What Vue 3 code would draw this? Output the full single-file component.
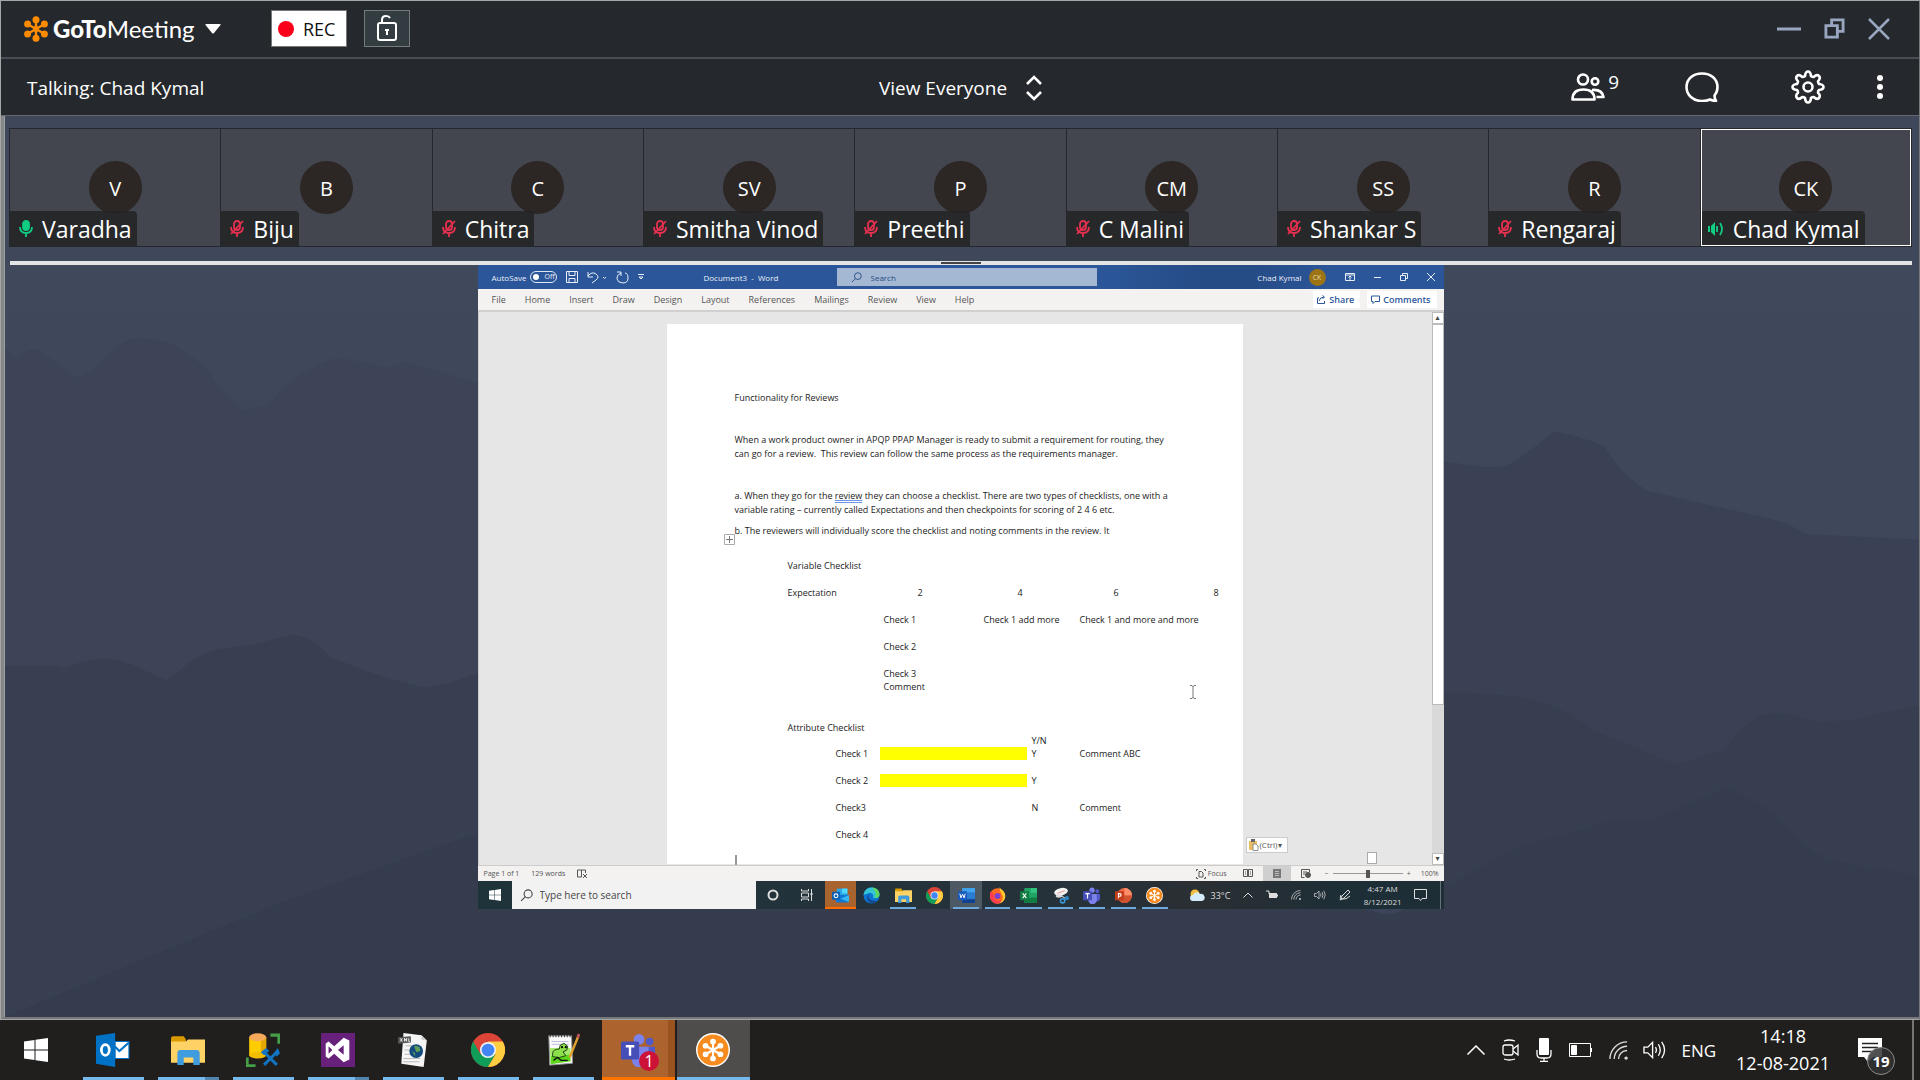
<script setup>
const people = [
  { initials: 'V', name: 'Varadha', state: 'on' },
  { initials: 'B', name: 'Biju', state: 'muted' },
  { initials: 'C', name: 'Chitra', state: 'muted' },
  { initials: 'SV', name: 'Smitha Vinod', state: 'muted' },
  { initials: 'P', name: 'Preethi', state: 'muted' },
  { initials: 'CM', name: 'C Malini', state: 'muted' },
  { initials: 'SS', name: 'Shankar S', state: 'muted' },
  { initials: 'R', name: 'Rengaraj', state: 'muted' },
  { initials: 'CK', name: 'Chad Kymal', state: 'talking' },
]
const tabs = ['File', 'Home', 'Insert', 'Draw', 'Design', 'Layout', 'References', 'Mailings', 'Review', 'View', 'Help']
const sharedApps = [
  { id: 'outlook', label: 'Outlook', cls: 'alert' },
  { id: 'edge', label: 'Edge', cls: '' },
  { id: 'folder', label: 'File Explorer', cls: 'open' },
  { id: 'chrome', label: 'Chrome', cls: '' },
  { id: 'word', label: 'Word', cls: 'open current' },
  { id: 'firefox', label: 'Firefox', cls: 'open' },
  { id: 'excel', label: 'Excel', cls: 'open' },
  { id: 'snip', label: 'Snip', cls: 'open' },
  { id: 'teams', label: 'Teams', cls: 'open' },
  { id: 'ppt', label: 'PowerPoint', cls: 'open' },
  { id: 'goto', label: 'GoToMeeting', cls: 'open' },
]
const apps = [
  { id: 'outlook-old', label: 'Outlook', cls: '' },
  { id: 'folder', label: 'File Explorer', cls: 'many' },
  { id: 'sql', label: 'Database Tools', cls: '' },
  { id: 'vs', label: 'Visual Studio', cls: 'many' },
  { id: 'xml', label: 'XML Editor', cls: '' },
  { id: 'chrome', label: 'Chrome', cls: '' },
  { id: 'notepad', label: 'Notepad++', cls: '' },
  { id: 'teams', label: 'Teams', cls: 'alert' },
  { id: 'goto', label: 'GoToMeeting', cls: 'current' },
]
</script>

<template>
  <div class="desktop">
    <svg class="defs" aria-hidden="true">
      <symbol id="flower" viewBox="-13 -13 26 26">
        <g stroke="currentColor" stroke-width="2.4" fill="currentColor">
          <path d="M0-9V9M-7.8-4.5 7.8 4.5M-7.8 4.5 7.8-4.5" />
          <g stroke="none">
            <circle cy="-9.3" r="3.5" /><circle cy="9.3" r="3.5" />
            <circle cx="-8.4" cy="-5" r="3.5" /><circle cx="8.4" cy="-5" r="3.5" />
            <circle cx="-8.4" cy="5" r="3.5" /><circle cx="8.4" cy="5" r="3.5" />
            <circle r="3" />
          </g>
        </g>
      </symbol>
      <symbol id="win" viewBox="0 0 24 24">
        <path fill="#fff" d="M0 3.4 10.5 2v9.4H0zM11.5 1.8 24 0v11.4H11.5zM0 12.6h10.5V22L0 20.6zM11.5 12.6H24V24l-12.5-1.8z" />
      </symbol>
      <symbol id="folder" viewBox="0 0 32 32">
        <path fill="#d99b00" d="M0 5q0-2 2-2h10l2 3v6H0z" /><path fill="#ffd266" d="M0 8h14l2-2h16v22H0z" />
        <path fill="#3f9cdf" d="M6 30V19q0-3 3-3h15q3 0 3 3v11h-6v-7h-9v7z" />
      </symbol>
      <symbol id="chrome" viewBox="-16 -16 32 32">
        <circle r="16" fill="#db4437" />
        <path fill="#0f9d58" d="M-13.9-8A16 16 0 0 0 0 16L7 4 0 0-7 4z" />
        <path fill="#ffcd40" d="M13.9-8A16 16 0 0 1 0 16L7 4 0-8z" />
        <circle r="7.6" fill="#f1f1f1" /><circle r="6" fill="#4285f4" />
      </symbol>
      <symbol id="teams" viewBox="0 0 32 32">
        <circle cx="17" cy="6" r="5" fill="#7b83eb" /><circle cx="27" cy="8" r="3.6" fill="#5059c9" />
        <path fill="#5059c9" d="M22 13h10v9a6 6 0 0 1-8 5z" /><path fill="#7b83eb" d="M9 13h17v11a8 8 0 0 1-16 1z" />
        <rect y="8" width="17" height="17" rx="1.5" fill="#464eb8" />
        <path d="M4.500 12.500h8M8.500 12.500v9" stroke="#fff" stroke-width="2.200" />
      </symbol>
      <symbol id="goto" viewBox="-16 -16 32 32">
        <circle r="16" fill="#fff" /><circle r="14.600" fill="#f68b1f" />
        <g stroke="#fff" stroke-width="2" fill="#fff"><path d="M0-8V8M-7-4 7 4M-7 4 7-4" />
          <g stroke="none"><circle cy="-8" r="2.700" /><circle cy="8" r="2.700" /><circle cx="-7" cy="-4" r="2.700" /><circle cx="7" cy="-4" r="2.700" /><circle cx="-7" cy="4" r="2.700" /><circle cx="7" cy="4" r="2.700" /></g>
        </g>
      </symbol>
      <symbol id="outlook-old" viewBox="0 0 32 32">
        <path fill="#0072c6" d="M0 2.500 18 0v32L0 29z" />
        <path fill="#fff" stroke="#0072c6" d="M18 8h13v16H18z" /><path fill="none" stroke="#0072c6" stroke-width="2" d="M18 13l4 4 9-8" />
        <ellipse cx="8.800" cy="16" rx="3.700" ry="5" fill="none" stroke="#fff" stroke-width="2.600" />
      </symbol>
      <symbol id="outlook" viewBox="0 0 32 32">
        <rect x="9" y="3" width="20" height="14" fill="#28a8ea" /><rect x="19" y="3" width="10" height="9" fill="#50d9ff" />
        <path fill="#0f78d4" d="M7 15h25v12q0 2-2 2H9q-2 0-2-2z" /><path fill="#35b8f1" d="M32 15v13L16 22z" />
        <rect y="9" width="15" height="15" rx="1" fill="#0a5fb5" /><circle cx="7.500" cy="16.500" r="3.600" fill="none" stroke="#fff" stroke-width="2" />
      </symbol>
      <symbol id="edge" viewBox="0 0 32 32">
        <circle cx="16" cy="16" r="15" fill="#0c74ce" />
        <path fill="#35c5d5" d="M1 15C2 6 9 1 16 1c9 0 15 6 15 13 0 5-4 7-8 7-3 0-5-1-4-3 2-5-5-8-10-6-4 1-7 2-8 3z" />
        <path fill="#5bd65e" d="M17 1c8 0 14 6 14 13 0 5-4 7-8 7 2-6 2-12-6-20z" />
        <path fill="#15458f" d="M11 14c-3 7 3 14 16 12-8 8-18 4-19-5 0-3 1-5 3-7z" />
      </symbol>
      <symbol id="word" viewBox="0 0 32 32">
        <rect x="8" y="2" width="24" height="28" rx="2" fill="#2b7cd3" /><path fill="#41a5ee" d="M8 2h24v8H8z" /><path fill="#103f91" d="M8 23h24v7H8z" />
        <rect y="8" width="17" height="17" rx="1" fill="#185abd" /><path d="M3.500 12.500l2 8 3-7 3 7 2-8" fill="none" stroke="#fff" stroke-width="1.800" />
      </symbol>
      <symbol id="excel" viewBox="0 0 32 32">
        <rect x="8" y="2" width="24" height="28" rx="2" fill="#21a366" /><path fill="#33c481" d="M20 2h12v9H20z" /><path fill="#107c41" d="M8 20h24v10H8z" />
        <rect y="8" width="17" height="17" rx="1" fill="#107c41" /><path d="M5 12l7 9M12 12l-7 9" stroke="#fff" stroke-width="2" />
      </symbol>
      <symbol id="ppt" viewBox="0 0 32 32">
        <circle cx="18" cy="16" r="14" fill="#ed6c47" /><path fill="#ff8f6b" d="M18 2a14 14 0 0 1 14 14H18z" /><path fill="#d35230" d="M4 16h28a14 14 0 0 1-28 0z" />
        <rect y="8" width="17" height="17" rx="1" fill="#c43e1c" /><path d="M6.500 21v-8.500h2.500a2.500 2.500 0 0 1 0 5H6.500" fill="none" stroke="#fff" stroke-width="2" />
      </symbol>
      <symbol id="firefox" viewBox="0 0 32 32">
        <circle cx="16" cy="17" r="14.500" fill="#ff6a1f" /><path fill="#ffcb2e" d="M20 0c1 5 12 8 10.500 19C29 28 22 31 16 31c9-3 12-9 9-15-1-5-6-8-5-16z" />
        <path fill="#ff3b55" d="M3 8c-3 11 0 19 10 23 7 1 10-3 10-6-9 4-15-2-13-9 0-4-5-4-7-8z" /><circle cx="16" cy="17" r="5.500" fill="#7b3fd1" />
      </symbol>
      <symbol id="snip" viewBox="0 0 32 32">
        <ellipse cx="17" cy="9" rx="13" ry="7" fill="#f3f3f3" transform="rotate(-12 17 9)" /><path d="M10 12l14-5" stroke="#d77" stroke-width="1.500" />
        <ellipse cx="13" cy="17" rx="6" ry="3" fill="#dcdcdc" /><circle cx="20" cy="26" r="4" fill="none" stroke="#3a9bdc" stroke-width="3" /><circle cx="28" cy="21" r="4" fill="#2b84c4" /><path d="M15 14l9 7" stroke="#ddd" stroke-width="2" />
      </symbol>
      <symbol id="sql" viewBox="0 0 32 32">
        <path fill="#fc0" d="M3 4h16v17H3z" /><path fill="#e2a800" d="M14 4h5v17h-5z" /><ellipse cx="11" cy="21" rx="8" ry="3" fill="#f5bd00" /><ellipse cx="11" cy="4" rx="8" ry="3.800" fill="#f5a95a" />
        <path d="M23 2h8v8M1 23v8h8" fill="none" stroke="#43a047" stroke-width="3" />
        <path d="M16 17l13 13M30 17 17 30" stroke="#1273c4" stroke-width="2.800" /><path d="M14 18l5-4 3 3-5 4zM26 19l4-5 2 5-3 3z" fill="#1273c4" />
      </symbol>
      <symbol id="vs" viewBox="0 0 36 36">
        <path fill="#68217a" d="M0 0h36v36H0z" /><path fill="#fff" fill-rule="evenodd" d="m24 5 6 3v20l-6 3-10-9-6 5-3-2V11l3-2 6 5zm0 8-6 5 6 5zM8 14v8l4-4z" />
      </symbol>
      <symbol id="xml" viewBox="0 0 32 32">
        <path fill="#f5f5f5" d="M7 0l17 2 5 5-3 25L5 29z" /><path fill="#c9c9c9" d="M24 2l5 5-5-1z" />
        <path d="M9 12h11M8 16h8M8 20h7M7 24h16M7 27h15" stroke="#bbb" />
        <path fill="#555" d="M2 4l12-1v6L2 10z" /><path d="M4 5l2 3m0-3L4 8m4 0V5l1 2 1-2v3m2-3v3h1" stroke="#fff" fill="none" stroke-width=".8" />
        <circle cx="19" cy="17" r="6.500" fill="#134a80" /><path fill="#5f9d57" d="M17 12l5 1 1 4-4 1zM15 17l3 2v3z" />
      </symbol>
      <symbol id="notepad" viewBox="0 0 36 36">
        <path fill="#fafafa" stroke="#999" d="M3 3h24l1 29-24 2z" /><path d="M4 3h24" stroke="#333" stroke-width="3" stroke-dasharray="1 2" />
        <path fill="#a5e86b" d="M4 16h22v14L5 32z" /><path fill="#5ed61c" d="M5 25l20-2 1 7-21 3z" /><path d="M6 9h18M6 12h18" stroke="#bbd" />
        <path fill="#8ee04a" stroke="#163d0b" d="M7 22q0-5 7-5l1-4 4-2 4 3-1 4-4 2 3 4-7 2-7-1z" /><circle cx="17" cy="15" r="1.200" /><circle cx="21" cy="15" r="1.200" /><path d="M8 29l4-3 4 3h7" fill="none" stroke="#111" stroke-width="1.500" />
        <path d="M25 26 34 4" stroke="#e0a02c" stroke-width="2.500" /><path d="M33.500 5 35 1" stroke="#b55" stroke-width="3" />
      </symbol>
      <symbol id="wifi" viewBox="0 0 20 20">
        <g fill="none" stroke="currentColor" stroke-width="1.400"><path d="M1 19A18 18 0 0 1 19 1" /><path d="M5.500 19A13.500 13.500 0 0 1 19 5.500" /><path d="M10 19a9 9 0 0 1 9-9" /></g><circle cx="18" cy="18" r="1.800" fill="currentColor" />
      </symbol>
      <symbol id="volume" viewBox="0 0 24 20">
        <g fill="none" stroke="currentColor" stroke-width="1.400"><path d="M1 7h4l5-5v16l-5-5H1zM13 7q2 3 0 6M16 4q4 6 0 12M19.500 1.500q6 8.500 0 17" /></g>
      </symbol>
      <symbol id="restore" viewBox="0 0 22 22">
        <path fill="none" stroke="currentColor" stroke-width="3" d="M2 8h12v12H2zM8 8V2h12v12h-6" />
      </symbol>
      <symbol id="search" viewBox="0 0 12 12">
        <circle cx="7.500" cy="4.500" r="3.700" fill="none" stroke="currentColor" /><path d="M5 7 1 11" stroke="currentColor" />
      </symbol>
    </svg>

    <main class="meeting">
      <header class="titlebar">
        <button class="brand" aria-label="GoToMeeting menu">
          <svg class="flower" width="26" height="26"><use href="#flower" /></svg>
          <span class="word-mark"><b>GoTo</b>Meeting</span>
          <svg width="16" height="10" viewBox="0 0 16 10"><path d="M1 0h14q1 0 .5 1L9 9q-1 1-2 0L.5 1Q0 0 1 0z" fill="#fff" /></svg>
        </button>
        <button class="rec"><span class="dot"></span>REC</button>
        <button class="lock" aria-label="Lock meeting">
          <svg width="20" height="26" viewBox="0 0 20 26" fill="none" stroke="#fff" stroke-width="2"><rect x="1" y="8" width="18" height="17" rx="2" /><path d="M5 8V5q0-4 4-4 3 0 4 2" /><path d="M10 14v6M8 15h4" /></svg>
        </button>
        <div class="window-buttons">
          <button aria-label="Minimise"><svg width="24" height="22"><path d="M0 11h24" stroke="currentColor" stroke-width="3" /></svg></button>
          <button aria-label="Restore"><svg width="21" height="21"><use href="#restore" /></svg></button>
          <button aria-label="Close"><svg width="22" height="22" viewBox="0 0 22 22"><path d="M1 1l20 20M21 1 1 21" stroke="currentColor" stroke-width="2.500" /></svg></button>
        </div>
      </header>

      <div class="toolbar">
        <span class="talking">Talking: Chad Kymal</span>
        <button class="view">View Everyone
          <svg width="16" height="26" viewBox="0 0 16 26" fill="none" stroke="#fff" stroke-width="2.600"><path d="M1 9l7-7 7 7M1 17l7 7 7-7" /></svg>
        </button>
        <div class="tools">
          <button class="attendees" aria-label="9 attendees">
            <svg width="34" height="28" viewBox="0 0 34 28" fill="none" stroke="#fff" stroke-width="2.600"><circle cx="12" cy="6.500" r="5" /><circle cx="24" cy="8.500" r="3.300" /><path d="M1.500 26.500q0-10 11-10t11 10zM21 17q10-1 11.500 7h-7" stroke-linejoin="round" /></svg>
            <span class="count">9</span>
          </button>
          <button aria-label="Chat"><svg width="34" height="30" viewBox="0 0 34 30" fill="none" stroke="#fff" stroke-width="2.600"><path d="M31 29q-3 0-6-1.500-3 1.500-8 1.500C8 29 1.500 23 1.500 15S8 1.500 17 1.500 32.500 7 32.500 15q0 5-3 8.500 0 3 1.500 5.500z" stroke-linejoin="round" /></svg></button>
          <button aria-label="Settings"><svg width="34" height="34" viewBox="-17 -17 34 34" fill="none" stroke="#fff" stroke-width="2.600"><circle r="4.500" /><path stroke-linejoin="round" d="M-3-11Q-2.500-15.500 0-15.500T3-11Q4-10 5.700-10 9-13 11-11T10-5.700Q10-4 11-3 15.500-2.500 15.500 0T11 3Q10 4 10 5.700 13 9 11 11T5.700 10Q4 10 3 11 2.500 15.500 0 15.500T-3 11Q-4 10-5.700 10-9 13-11 11T-10 5.700Q-10 4-11 3-15.500 2.500-15.500 0T-11-3Q-10-4-10-5.700-13-9-11-11T-5.700-10Q-4-10-3-11z" /></svg></button>
          <button aria-label="More"><svg width="8" height="26"><circle cx="4" cy="4" r="3" fill="#fff" /><circle cx="4" cy="13" r="3" fill="#fff" /><circle cx="4" cy="22" r="3" fill="#fff" /></svg></button>
        </div>
      </div>

      <div class="body">
        <section class="strip">
          <article v-for="p in people" :key="p.name" class="card" :class="p.state">
            <div class="avatar">{{ p.initials }}</div>
            <div class="chip">
              <svg v-if="p.state === 'talking'" width="16" height="14" viewBox="0 0 16 14"><path fill="#0fce83" d="M0 4h2v6H0zM3 4l4-4v14l-4-4z" /><path d="M9 4v6M12 1q4 6 0 12" stroke="#0fce83" stroke-width="1.800" fill="none" /></svg>
              <svg v-else width="14" height="17" viewBox="0 0 14 17" fill="none" :stroke="p.state === 'on' ? '#0fce83' : '#e6304f'" stroke-width="1.800">
                <rect x="4" y="1" width="6" height="9" rx="3" :fill="p.state === 'on' ? '#0fce83' : 'none'" /><path d="M1 7q0 6 6 6t6-6M7 13v4" /><path v-if="p.state === 'muted'" d="M1 14 13 1" />
              </svg>
              <span>{{ p.name }}</span>
            </div>
          </article>
        </section>
        <div class="splitter"><span></span></div>

        <section class="stage">
          <svg class="hills" viewBox="0 30 1568 1538" preserveAspectRatio="none" aria-hidden="true">
            <path fill="#3e485a" d="M1170 190q70-8 120 5 80 30 150 50 70 20 128 25v900h-398z" />
            <path fill="#3d4457" d="M0 200l10 20q8-20 16-18l34 60q10-10 22-45 16-38 28-37 22 0 34 22 24 40 30 75l21 51 22-12q10-40 26-62 22-34 32-34l40 20 12-12q28 20 65 47V1200H0z" />
            <path fill="#3a4154" d="M1170 425q30 18 48 18 14 0 24-20l28-53q20 10 40 30 14 60 36 92l84 48q30 14 45 40l93 12v900h-398z" />
            <path fill="#373f51" d="M0 850h45l3 5q20-20 37-20 18 8 30 25l17 20 22-42q14-22 26-24l24-8 31-20q20 6 30 44 44 46 80 64l20-10 35-30V1568H0z" />
            <path fill="#363e50" d="M1170 905q50-2 80 14 30 16 50 62l70 71 40-32q14-60 35-72 14-6 40 17l30-5 53-30v638h-398z" />
            <path fill="#343c4e" d="M0 1568 220 1340 400 1180l720 170q12 16 26-2l94-128q30-20 60-40 10-15 50-15l60-67 40 52q22 80 50 100l68 30v288z" />
          </svg>

          <div class="shared">
            <div class="word-title">
              <div class="quick">
                <span>AutoSave</span>
                <span class="toggle"><i></i>Off</span>
                <svg width="12" height="12" viewBox="0 0 12 12" fill="none" stroke="currentColor"><path d="M.5.5h11v11h-11zM3 .5v4h6v-4M3 11.500v-4h6v4" /></svg>
                <svg width="20" height="13" viewBox="0 0 20 13" fill="none" stroke="currentColor"><path d="M1 1v5h5M1 5q4-5 8-2t0 6l-4 3M16 6l1.500 1.500L19 6" /></svg>
                <svg width="13" height="13" viewBox="0 0 13 13" fill="none" stroke="currentColor"><path d="M1 1h4v4M5 2q-5 2-4 6t6 4 5-5-3-5" /></svg>
                <svg width="6" height="6" viewBox="0 0 6 6" fill="none" stroke="currentColor"><path d="M0 .5h6M1 3h4L3 5z" /></svg>
              </div>
              <div class="doc-name">Document3&nbsp; -&nbsp; Word</div>
              <label class="find"><svg width="11" height="11"><use href="#search" /></svg><input type="text" placeholder="Search" aria-label="Search" /></label>
              <div class="account">
                <span>Chad Kymal</span><span class="ck">CK</span>
                <svg width="10" height="8" viewBox="0 0 10 8" fill="none" stroke="currentColor"><path d="M.5.5h9v7h-9zM.5 2h9M5 7V3M3.500 4.500 5 3l1.500 1.500" /></svg>
                <svg width="7" height="8"><path d="M0 4.500h7" stroke="currentColor" /></svg>
                <svg width="8" height="8" viewBox="0 0 8 8" fill="none" stroke="currentColor"><path d="M.5 2.500h5v5h-5zM2.500 2V.5h5v5H6" /></svg>
                <svg width="8" height="8"><path d="M0 0l8 8M8 0 0 8" stroke="currentColor" /></svg>
              </div>
            </div>

            <nav class="ribbon">
              <button v-for="t in tabs" :key="t">{{ t }}</button>
              <span class="grow"></span>
              <button class="boxed"><svg width="9" height="9" viewBox="0 0 9 9" fill="none" stroke="currentColor"><path d="M2 3H.5v5.500h7V6M2 6q1-4 5-4M5.500.5 7.500 2 5.500 4" /></svg>Share</button>
              <button class="boxed"><svg width="9" height="9" viewBox="0 0 9 9" fill="none" stroke="currentColor"><path d="M.5 1h8v5.500H4l-2 2v-2H.5z" /></svg>Comments</button>
            </nav>

            <div class="canvas">
              <div class="page">
                <h1>Functionality for Reviews</h1>
                <p>When a work product owner in APQP PPAP Manager is ready to submit a requirement for routing, they<br />can go for a review.&nbsp; This review can follow the same process as the requirements manager.</p>
                <p>a. When they go for the <u>review</u> they can choose a checklist. There are two types of checklists, one with a<br />variable rating – currently called Expectations and then checkpoints for scoring of 2 4 6 etc.</p>
                <p class="last">b. The reviewers will individually score the checklist and noting comments in the review. It
                  <svg class="anchor" width="11" height="11" viewBox="0 0 11 11" fill="none" stroke="#777"><path d="M.5.5h10v10H.5z" stroke="#aaa" /><path d="M5.500 2v7M2 5.500h7" /></svg>
                </p>
                <table class="variable">
                  <colgroup><col class="w96" /><col class="w100" /><col class="w96" /><col class="w100" /><col /></colgroup>
                  <tbody>
                    <tr><td colspan="5">Variable Checklist</td></tr>
                    <tr><td>Expectation</td><td class="num">2</td><td class="num">4</td><td class="num">6</td><td class="num">8</td></tr>
                    <tr><td></td><td>Check 1</td><td>Check 1 add more</td><td colspan="2">Check 1 and more and more</td></tr>
                    <tr><td></td><td>Check 2</td><td colspan="3"></td></tr>
                    <tr><td></td><td>Check 3<br />Comment</td><td colspan="3"></td></tr>
                  </tbody>
                </table>
                <table class="attribute">
                  <colgroup><col class="w48" /><col class="w44" /><col class="w147" /><col class="w53" /><col /></colgroup>
                  <tbody>
                    <tr class="short"><td colspan="5">Attribute Checklist</td></tr>
                    <tr class="short"><td colspan="3"></td><td class="yn">Y/N</td><td></td></tr>
                    <tr><td></td><td>Check 1</td><td><mark></mark></td><td class="yn">Y</td><td>Comment ABC</td></tr>
                    <tr><td></td><td>Check 2</td><td><mark></mark></td><td class="yn">Y</td><td></td></tr>
                    <tr><td></td><td>Check3</td><td></td><td class="yn">N</td><td>Comment</td></tr>
                    <tr><td></td><td>Check 4</td><td></td><td></td><td></td></tr>
                  </tbody>
                </table>
                <div class="caret"></div>
                <svg class="ibeam" width="8" height="14" viewBox="0 0 8 14" fill="none" stroke="#777"><path d="M1 .5h2l1 1 1-1h2M4 1v12M1 13.500h2l1-1 1 1h2" /></svg>
              </div>
              <button class="paste"><svg width="10" height="12" viewBox="0 0 10 12"><path fill="#e9bd66" d="M0 2h8v9H0z" /><path fill="#666" d="M2 0h4v3H2z" /><path fill="#fff" stroke="#777" stroke-width=".8" d="M4 5h3l2 2v4.500H4z" /></svg>(Ctrl) <span>▾</span></button>
              <span class="mini"></span>
              <div class="scroll"><i>▴</i><b></b><i class="down">▾</i></div>
            </div>

            <footer class="status">
              <span>Page 1 of 1</span><span>129 words</span>
              <svg width="11" height="10" viewBox="0 0 11 10" fill="none" stroke="currentColor"><path d="M.5 1h4v7h-4zM4.500 1h4v3M6 5l4 4M10 5 6 9" /></svg>
              <span class="grow"></span>
              <span class="focus"><svg width="10" height="10" viewBox="0 0 10 10" fill="none" stroke="currentColor"><path d="M.5 2V.5H2M8 .5h1.500V2M.5 8v1.500H2M8 9.500h1.500V8M3 2.500h2.500L7 4v4H3z" /></svg>Focus</span>
              <svg width="10" height="9" viewBox="0 0 10 9" fill="none" stroke="currentColor"><path d="M.5.5h4v7h-4zM5.500.5h4v7h-4zM2 3h1M2 5h1M7 3h1M7 5h1" /></svg>
              <span class="layout"><svg width="8" height="9" viewBox="0 0 8 9"><path fill="#777" d="M0 0h8v9H0z" /><path d="M2 2.500h4M2 4.500h4M2 6.500h4" stroke="#bbb" /></svg></span>
              <svg width="10" height="9" viewBox="0 0 10 9" fill="none" stroke="currentColor"><path d="M.5.5h8v3M.5.5v8h3M2 3h4M2 5h2" /><circle cx="7" cy="6" r="2.500" fill="#555" /></svg>
              <span class="zoom"><span>−</span><input type="range" aria-label="Zoom" value="50" /><span>+</span></span>
              <span class="pct">100%</span>
            </footer>

            <div class="inner-bar">
              <button class="begin" aria-label="Start"><svg width="12" height="12"><use href="#win" /></svg></button>
              <label class="type"><svg width="13" height="13"><use href="#search" /></svg><input type="text" placeholder="Type here to search" aria-label="Type here to search" /></label>
              <div class="helpers">
                <svg width="12" height="12"><circle cx="6" cy="6" r="4.500" fill="none" stroke="#ddd" stroke-width="2" /></svg>
                <svg width="12" height="12" viewBox="0 0 12 12" fill="none" stroke="#ddd"><path d="M.5 0v2h7V0M.5 12v-2h7v2M.5 4h7v4h-7zM10.500 0v12M9 5h3" /></svg>
              </div>
              <div class="inner-apps">
                <button v-for="a in sharedApps" :key="a.id" :class="a.cls" :aria-label="a.label"><svg width="17" height="17"><use :href="'#' + a.id" /></svg></button>
              </div>
              <div class="inner-tray">
                <span class="weather"><svg width="15" height="13" viewBox="0 0 15 13"><circle cx="5" cy="5" r="4.500" fill="#f5c041" /><path fill="#d7ecfb" d="M3 12a3 3 0 0 1 0-6 4 4 0 0 1 7-1 3.500 3.500 0 0 1 2 7z" /></svg>33°C</span>
                <svg width="10" height="6" viewBox="0 0 10 6" fill="none" stroke="currentColor"><path d="M.5 5.500 5 1l4.500 4.500" /></svg>
                <svg width="12" height="10" viewBox="0 0 12 10"><path fill="none" stroke="currentColor" d="M0 1h3v3h2" /><path fill="currentColor" d="M3 3h8v5H3zM11 4.500h1v2h-1z" /></svg>
                <svg width="10" height="10"><use href="#wifi" /></svg>
                <svg width="12" height="10"><use href="#volume" /></svg>
                <svg width="12" height="12" viewBox="0 0 12 12" fill="none" stroke="currentColor"><path d="M1 11l2-4 6-6 2 2-6 6zM2 6Q0 9 3 10q4 1 8-3" /></svg>
                <span class="clock">4:47 AM<br />8/12/2021</span>
                <svg width="13" height="12" viewBox="0 0 13 12" fill="none" stroke="currentColor"><path d="M.5.5h12v9H8l-1.500 2L5 9.500H.5z" /></svg>
              </div>
            </div>
          </div>
        </section>
      </div>
    </main>

    <footer class="taskbar">
      <button class="start" aria-label="Start"><svg width="24" height="24"><use href="#win" /></svg></button>
      <button v-for="a in apps" :key="a.id" class="app" :class="a.cls" :aria-label="a.label">
        <svg width="34" height="34"><use :href="'#' + a.id" /></svg>
        <span v-if="a.id === 'teams'" class="badge">1</span>
      </button>
      <div class="tray">
        <svg width="18" height="10" viewBox="0 0 18 10" fill="none" stroke="#fff" stroke-width="1.500"><path d="M.5 9.500 9 1l8.500 8.500" /></svg>
        <svg width="17" height="22" viewBox="0 0 17 22" fill="none" stroke="#fff" stroke-width="1.300"><rect x="1" y="6" width="10" height="10" rx="2" /><path d="M11 10l5-4v10l-5-4M2 2q5-2 11 0M2 20q5 2 11 0" /></svg>
        <svg width="16" height="24" viewBox="0 0 16 24"><rect x="3" width="10" height="17" rx="1" fill="#fff" /><path d="M1 12v4q0 4 4 4h6q4 0 4-4v-4M8 20v3M4 23.500h8" fill="none" stroke="#fff" stroke-width="1.300" /></svg>
        <svg width="23" height="14" viewBox="0 0 23 14" fill="none" stroke="#fff"><path d="M.5.5h21v13H.5zM22.500 5v4" /><path d="M2.500 2.500h5v9h-5z" fill="#fff" /></svg>
        <svg class="tight" width="19" height="19" color="#ddd"><use href="#wifi" /></svg>
        <svg class="tight" width="23" height="20" color="#fff"><use href="#volume" /></svg>
        <span class="lang">ENG</span>
        <span class="when">14:18<br />12-08-2021</span>
        <span class="notes">
          <svg width="24" height="24" viewBox="0 0 24 24"><path fill="#fff" d="M0 0h24v19h-9l-5 5-4-5H0z" /><path d="M4 5.500h16M4 9.500h16M4 13.500h10" stroke="#222" stroke-width="1.500" /></svg>
          <b>19</b>
        </span>
      </div>
    </footer>
  </div>
</template>

<style>
body { margin: 0; background: #201f1e; }
</style>

<style scoped>
* { box-sizing: border-box; }
button, input { font: inherit; color: inherit; background: none; border: 0; padding: 0; margin: 0; }
svg { display: block; flex: none; }
.defs { position: absolute; width: 0; height: 0; }
.desktop { min-height: 100vh; display: flex; flex-direction: column; font-family: "Open Sans", "Noto Sans", sans-serif; color: #fff; }
.grow { flex: 1; }
.meeting { flex: 1; display: flex; flex-direction: column; border: 1px solid #a5a7a6; border-right-color: #77787a; background: #25282d; }

.titlebar { height: 58px; display: flex; align-items: center; padding: 0 29px 1px 22px; border-bottom: 2px solid #4a4d55; }
.brand { display: flex; align-items: center; width: 248px; }
.flower { color: #ff8b00; margin-right: 4px; }
.word-mark { font: 400 24px/30px Lato, sans-serif; margin-right: 10px; }
.word-mark b { font-weight: 900; }
.rec { height: 37px; width: 76px; background: #fff; border: 1px solid #777; color: #111; font-size: 18px; display: flex; align-items: center; padding-left: 6px; gap: 9px; }
.dot { width: 16px; height: 16px; border-radius: 50%; background: #fb0019; }
.lock { width: 46px; height: 37px; margin-left: 17px; border: 1px solid #747a7e; background: #323c41; display: flex; justify-content: center; padding-top: 4px; }
.window-buttons { margin-left: auto; display: flex; align-items: center; gap: 23px; color: #98a7bf; }

.toolbar { height: 57px; display: grid; grid-template-columns: 1fr auto 1fr; align-items: center; padding: 2px 25px 0 26px; border-bottom: 1px solid #66686e; font-size: 19px; }
.view { display: flex; align-items: center; gap: 19px; }
.tools { display: flex; align-items: center; justify-content: flex-end; padding: 0 10px 2px 0; }
.tools button { margin-left: 66px; }
.tools button:nth-child(3) { margin-left: 72px; }
.tools button:last-child { margin-left: 51px; }
.attendees { display: flex; gap: 3px; }
.count { line-height: 18px; }

.body { flex: 1; display: flex; flex-direction: column; background: #3f475b; border-left: 3px solid #858789; border-bottom: 2px solid #77787a; box-shadow: inset 1px 0 #9da0a4; }
.strip { display: grid; grid-template-columns: repeat(9, 1fr); margin: 12px 7px 14px 5px; height: 119px; border: 1px solid #25272a; border-left: 0; background: #43464f; }
.card { position: relative; border-left: 1px solid #25272a; display: flex; align-items: center; justify-content: center; }
.card.talking::after { content: ""; position: absolute; inset: 0; border: 1px solid #fff; }
.avatar { width: 53px; height: 53px; border-radius: 50%; background: #2c2624; font-size: 20px; line-height: 55px; text-align: center; }
.chip { position: absolute; left: 0; bottom: 0; height: 35px; display: flex; align-items: center; gap: 9px; padding: 0 5px 0 9px; background: rgba(37, 37, 38, .9); border-radius: 0 4px 0 0; font-size: 23px; line-height: 34px; white-space: nowrap; }
.talking .chip { padding-left: 7px; }
.splitter { height: 4px; margin: 0 7px 0 6px; background: #e4e6e4; display: flex; justify-content: center; align-items: center; }
.splitter span { width: 40px; height: 2px; background: #444; }

.stage { flex: 1; position: relative; display: flex; flex-direction: column; align-items: center; background: linear-gradient(#40485b, #3c4459 50%); margin-left: 1px; padding: 0 3px 108px 0; }
.hills { position: absolute; inset: 0; width: 100%; height: 100%; }
.shared { position: relative; width: min(966px, 100%); background: #e6e6e6; color: #444; overflow: hidden; }

.word-title { height: 24px; display: grid; grid-template-columns: 226px 133px 260px 1fr; align-items: center; background: #2b579a; color: #e8eef8; font-size: 8px; }
.quick { display: flex; align-items: center; gap: 9px; padding-left: 14px; }
.toggle { width: 27px; height: 12px; margin-left: -5px; border: 1px solid #dfe7f4; border-radius: 6px; display: flex; align-items: center; gap: 5px; padding-left: 2px; font-size: 7px; line-height: 10px; }
.toggle i { width: 6px; height: 6px; border-radius: 50%; background: #fff; }
.find { height: 18px; background: #a4b7d3; color: #274b86; display: flex; align-items: center; gap: 9px; padding-left: 14px; }
input { min-width: 0; outline: none; }
.find input::placeholder { color: #274b86; opacity: 1; }
.account { height: 24px; display: flex; align-items: center; justify-content: flex-end; gap: 19px; padding-right: 9px; background: linear-gradient(90deg, #2b579a, #264c86 30%, #264c86 45%, #2b579a 70%); }
.ck { width: 17px; height: 17px; border-radius: 50%; background: #9c7413; color: #e8d9a8; font-size: 7px; line-height: 17px; text-align: center; margin-left: -12px; }

.ribbon { height: 21px; display: flex; align-items: center; gap: 19px; padding: 0 7px 0 14px; background: #f3f2f1; font-size: 9px; color: #555; }
.boxed { height: 17px; padding: 0 6px 0 4px; background: #fff; color: #2b579a; font-weight: 600; display: flex; align-items: center; gap: 3px; border-radius: 1px; }
.boxed + .boxed { margin-left: -12px; }

.canvas { position: relative; height: 555px; padding: 13px 12px 0 189px; border-left: 1px solid #ccc; border-top: 2px solid #d0d0d0; overflow: hidden; }
.page { position: relative; width: 576px; height: 540px; margin-top: -1px; margin-left: -1px; padding: 67px 0 0 68px; background: #fff; color: #222; font: 400 9px/14px "Open Sans", "Noto Sans", sans-serif; white-space: nowrap; }
.page h1 { font: inherit; margin: 0 0 28px; }
.page p { margin: 0 0 28px; }
.page p:nth-of-type(2) { margin-bottom: 7px; }
.page .last { position: relative; margin-bottom: 21px; }
u { text-decoration: underline double #6f93e6; }
.anchor { position: absolute; left: -11px; top: 10px; }
table { table-layout: fixed; width: 455px; margin-left: 53px; border-collapse: collapse; line-height: 13px; }
.variable { margin-bottom: 27px; }
tr { height: 27px; }
.short { height: 13px; }
td { padding: 0; vertical-align: top; }
.num { padding-left: 34px; }
.yn { padding-left: 5px; }
.w96 { width: 96px; } .w100 { width: 100px; } .w48 { width: 48px; } .w44 { width: 44px; } .w147 { width: 147px; } .w53 { width: 53px; }
mark { display: block; height: 13px; background: #ff0; }
.caret { width: 2px; height: 11px; background: #999; }
.ibeam { position: absolute; left: 522px; top: 361px; }
.paste { position: absolute; left: 767px; bottom: 12px; width: 42px; height: 16px; background: #fdfdfd; border: 1px solid #ccc; color: #555; font-size: 8px; line-height: 12px; display: flex; align-items: center; gap: 1px; padding-left: 2px; }
.mini { position: absolute; right: 67px; bottom: 1px; width: 10px; height: 12px; background: #fff; border: 1px solid #aaa; }
.scroll { position: absolute; top: 0; right: 0; bottom: 0; width: 12px; background: #d9d9d9; display: flex; flex-direction: column; }
.scroll i, .scroll b { display: block; background: #fff; border: 1px solid #bbb; }
.scroll i { height: 12px; font: normal 8px/10px "DejaVu Sans", sans-serif; text-align: center; }
.scroll b { height: 381px; }
.scroll .down { margin-top: auto; }

.status { height: 16px; display: flex; align-items: center; gap: 12px; padding: 0 5px 0 6px; background: #f3f2f1; border-top: 1px solid #ccc; font-size: 7px; line-height: 14px; color: #555; }
.focus { display: flex; align-items: center; gap: 2px; margin-right: 4px; }
.layout { width: 28px; height: 15px; background: #cfcfcf; display: flex; align-items: center; justify-content: center; margin: 0 -2px; }
.zoom { display: flex; align-items: center; gap: 4px; margin-left: 2px; }
.zoom input { width: 70px; height: 8px; appearance: none; background: linear-gradient(#999, #999) center / 100% 1px no-repeat; }
.zoom input::-webkit-slider-thumb { appearance: none; width: 4px; height: 8px; background: #555; }
.pct { margin-left: -2px; }

.inner-bar { height: 28px; display: flex; background: linear-gradient(90deg, #1f333b, #26323a 60%, #2a2f33 75%, #1d2e36 90%); color: #ddd; }
.begin { width: 34px; display: flex; align-items: center; justify-content: center; }
.type { width: 244px; background: #f2f2f2; color: #444; font-size: 10px; display: flex; align-items: center; gap: 7px; padding-left: 8px; }
.type input::placeholder { color: #444; opacity: 1; }
.helpers { width: 69px; display: flex; align-items: center; justify-content: center; gap: 22px; }
.inner-apps { width: 346px; display: grid; grid-template-columns: repeat(11, 1fr); }
.inner-apps button { display: flex; align-items: center; justify-content: center; position: relative; }
.inner-apps .alert { background: #a9632f; box-shadow: inset 0 -2px #ff6d00; }
.inner-apps .current { background: #4d5a63; }
.inner-apps .open::after { content: ""; position: absolute; left: 3px; right: 3px; bottom: 0; height: 2px; background: #6da9dc; }
.inner-tray { flex: 1; display: flex; align-items: center; justify-content: space-between; padding: 0 12px 0 19px; margin-right: 3px; border-right: 1px solid #66737a; }
.weather { display: flex; align-items: center; gap: 6px; font-size: 9px; }
.clock { font-size: 8px; line-height: 13px; text-align: center; }

.taskbar { height: 60px; display: flex; background: #201f1e; }
.start { width: 76px; padding-right: 4px; display: flex; align-items: center; justify-content: center; }
.app { position: relative; width: 73px; margin-left: 1px; margin-right: 1px; padding-right: 2px; display: flex; align-items: center; justify-content: center; }
.app::after { content: ""; position: absolute; left: 6px; right: 6px; bottom: 0; height: 3px; background: #76b9ed; }
.app.many::after { background: linear-gradient(90deg, #76b9ed 47px, #5486ad 47px); }
.app.alert { background: linear-gradient(90deg, #ac632d 66px, #98531f 66px); }
.app.alert::after { left: 0; right: 0; background: #ff7300; }
.app.current { background: #4e4d4c; }
.app.current::after { left: 0; right: 0; }
.badge { position: absolute; left: 37px; top: 31px; width: 20px; height: 20px; border-radius: 50%; background: #cc1236; font-size: 16px; line-height: 20px; text-align: center; }
.tray { margin-left: auto; display: flex; align-items: center; font-size: 18px; padding-right: 30px; margin-right: 6px; border-right: 2px solid #777571; }
.tray > svg { margin-right: 17px; }
.tray > .tight { margin-right: 15px; }
.lang { font-size: 17px; margin-right: 20px; }
.when { line-height: 27px; text-align: center; }
.notes { position: relative; margin-left: 28px; }
.notes b { position: absolute; left: 9px; top: 9px; width: 28px; height: 28px; border-radius: 50%; border: 1px solid #8a8a8a; background: rgba(50, 50, 50, .85); font-size: 15px; line-height: 26px; text-align: center; }
</style>
